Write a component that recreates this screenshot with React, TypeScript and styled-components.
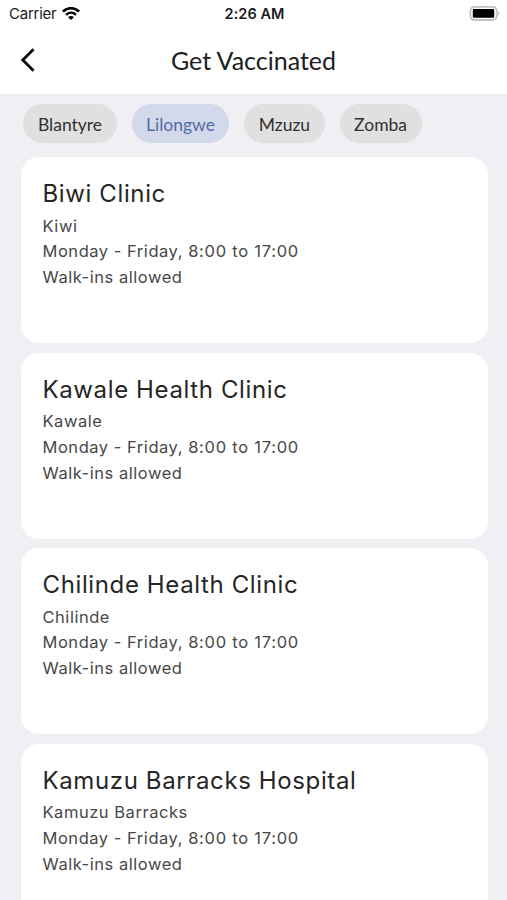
import React from "react";
import styled, { createGlobalStyle } from "styled-components";

const GlobalStyle = createGlobalStyle`
  *, *::before, *::after { box-sizing: border-box; }
  html, body { margin: 0; padding: 0; background: #f0eff4; overflow: hidden; }
  h1, h2, p { margin: 0; font-weight: 400; }
  button { border: 0; padding: 0; font: inherit; background: none; cursor: pointer; }
`;

const Screen = styled.div`
  display: flex;
  flex-direction: column;
  width: 100%;
  height: 900px;
  overflow: hidden;
  background: #f0eff4;
  font-family: Inter, "Liberation Sans", sans-serif;
`;

const StatusBar = styled.div`
  display: grid;
  grid-template-columns: 1fr auto 1fr;
  align-items: center;
  flex: none;
  height: 27px;
  padding: 0 7px 0 9px;
  background: #fff;
  color: #1c1c1c;
  font-size: 15px;
`;

const Carrier = styled.div`
  display: flex;
  align-items: center;
  gap: 5.5px;
  letter-spacing: -0.25px;
`;

const Clock = styled.div`
  font-size: 14.5px;
  font-weight: 600;
  letter-spacing: 0.05px;
`;

const Battery = styled.div`
  display: flex;
  justify-content: flex-end;
`;

const Header = styled.header`
  display: grid;
  grid-template-columns: 60px 1fr 60px;
  align-items: center;
  flex: none;
  height: 67px;
  padding-bottom: 2px;
  background: #fff;
`;

const BackButton = styled.button`
  display: flex;
  align-items: center;
  height: 44px;
  padding-left: 20px;
`;

const Title = styled.h1`
  color: #202020;
  font-family: Lato, sans-serif;
  font-size: 25px;
  line-height: 30px;
  text-align: center;
`;

const Chips = styled.nav`
  display: flex;
  flex: none;
  gap: 14.7px;
  padding: 10px 23px 14px;
`;

const Chip = styled.button<{ $width: number; $active?: boolean }>`
  && {
    width: ${(p) => p.$width}px;
    height: 39px;
    padding-top: 1px;
    border-radius: 20px;
    background: ${(p) => (p.$active ? "#d1d9ea" : "#e0e0e0")};
    color: ${(p) => (p.$active ? "#556ba5" : "#303030")};
    font-family: Lato, sans-serif;
    font-size: 17.5px;
  }
`;

const List = styled.main`
  display: flex;
  flex-direction: column;
  gap: 9.5px;
  padding: 0 19.5px 0 20.5px;
`;

const Card = styled.article`
  flex: none;
  height: 186px;
  padding: 20px 22px;
  border-radius: 18px;
  background: #fff;
`;

const Name = styled.h2`
  margin-bottom: 2.6px;
  color: #262626;
  font-size: 24px;
  line-height: 34px;
  letter-spacing: 0.62px;
  white-space: nowrap;
`;

const Detail = styled.p`
  color: #484848;
  font-size: 16.5px;
  line-height: 25.7px;
  letter-spacing: 0.53px;
  white-space: nowrap;
`;

const Time = styled.span`
  letter-spacing: 0.74px;
`;

const cities = [
  { name: "Blantyre", width: 94 },
  { name: "Lilongwe", width: 97.5, active: true },
  { name: "Mzuzu", width: 81 },
  { name: "Zomba", width: 82 },
];

const clinics = [
  { name: "Biwi Clinic", area: "Kiwi" },
  { name: "Kawale Health Clinic", area: "Kawale" },
  { name: "Chilinde Health Clinic", area: "Chilinde" },
  { name: "Kamuzu Barracks Hospital", area: "Kamuzu Barracks" },
];

const WifiIcon = () => (
  <svg width="18" height="14" viewBox="0 0 18 14" fill="none" stroke="#080808">
    <path d="M.9 4.6C5.5.1 12.5.1 17.1 4.6" strokeWidth="2.7" />
    <path d="M4 7.8C6.9 5.1 11.1 5.1 14 7.8" strokeWidth="2.4" />
    <path d="M9 13.1 6.1 10.2C7.7 8.7 10.3 8.7 11.9 10.2Z" fill="#080808" stroke="none" />
  </svg>
);

const BatteryIcon = () => (
  <svg width="31" height="16" viewBox="0 0 31 16">
    <rect x="1.4" y=".8" width="26.3" height="13.2" rx="4" fill="#fff" stroke="#c2c2c2" strokeWidth="1.8" />
    <rect x="3.8" y="3" width="21.4" height="8.8" rx="1" fill="#000" />
    <path d="M28.9 5.2C31 6 31 8.9 28.9 9.7Z" fill="#c2c2c2" />
  </svg>
);

const BackIcon = () => (
  <svg width="16" height="26" viewBox="0 0 16 26" fill="none" stroke="#111" strokeWidth="2.9">
    <path d="M13.6 2.3 2.8 13 13.6 23.7" />
  </svg>
);

export default function App() {
  return (
    <>
      <GlobalStyle />
      <Screen>
        <StatusBar>
          <Carrier>Carrier<WifiIcon /></Carrier>
          <Clock>2:26 AM</Clock>
          <Battery><BatteryIcon /></Battery>
        </StatusBar>
        <Header>
          <BackButton aria-label="Back"><BackIcon /></BackButton>
          <Title>Get Vaccinated</Title>
        </Header>
        <Chips>
          {cities.map((c) => (
            <Chip key={c.name} $width={c.width} $active={c.active}>{c.name}</Chip>
          ))}
        </Chips>
        <List>
          {clinics.map((c) => (
            <Card key={c.name}>
              <Name>{c.name}</Name>
              <Detail>{c.area}</Detail>
              <Detail>Monday - Friday, <Time>8:00 to 17:00</Time></Detail>
              <Detail>Walk-ins allowed</Detail>
            </Card>
          ))}
        </List>
      </Screen>
    </>
  );
}
